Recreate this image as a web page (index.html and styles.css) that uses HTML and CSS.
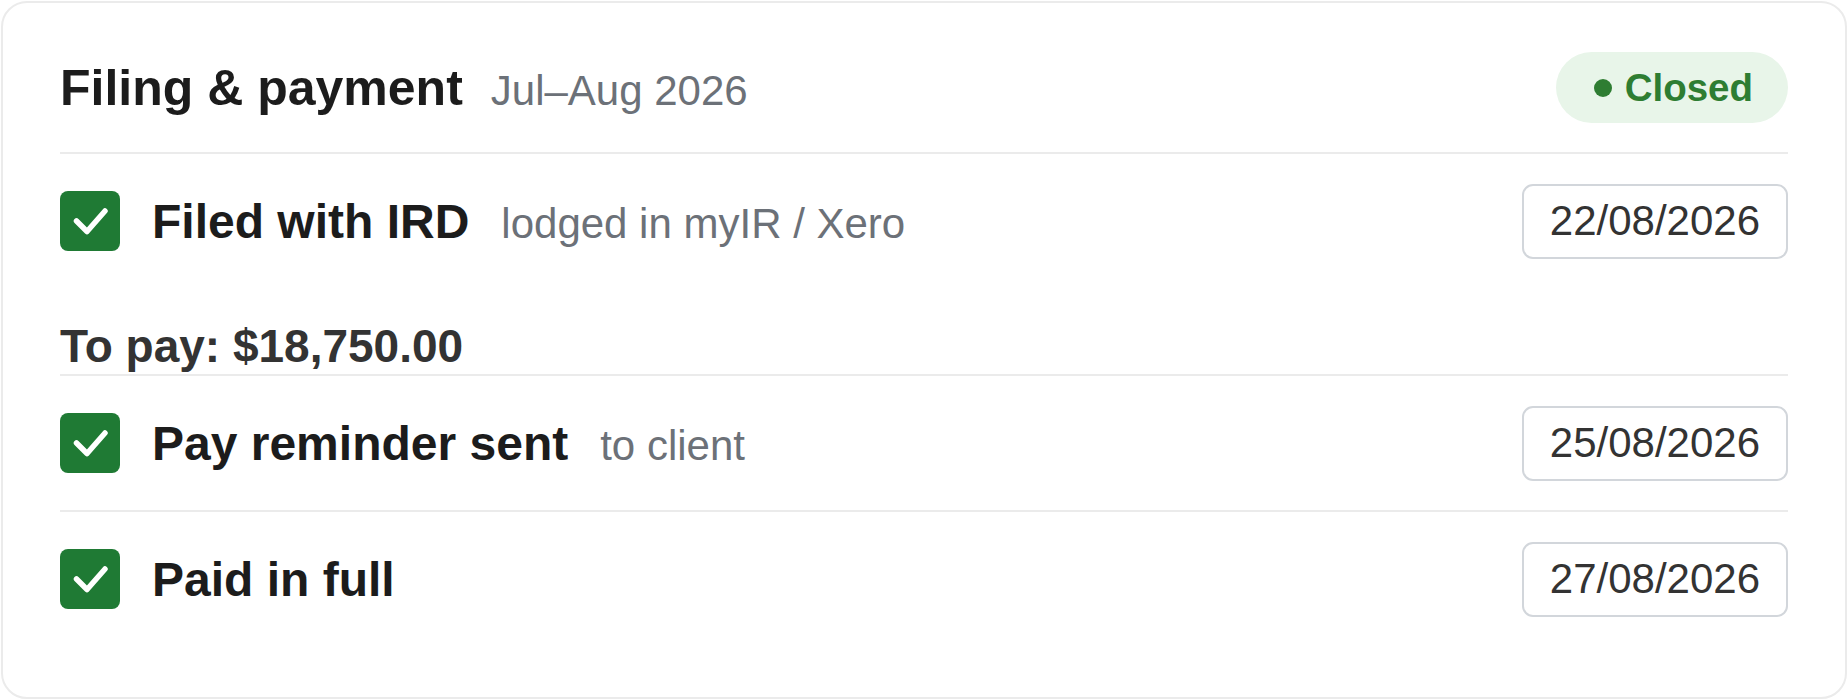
FILE: index.html
```html
<!DOCTYPE html>
<html lang="en">
<head>
<meta charset="utf-8">
<title>Filing &amp; payment</title>
<link rel="stylesheet" href="styles.css">
</head>
<body>
<section class="card">
  <header class="card-head">
    <div class="head-titles">
      <h2 class="title">Filing &amp; payment</h2>
      <span class="period">Jul–Aug 2026</span>
    </div>
    <span class="badge"><span class="badge-dot"></span>Closed</span>
  </header>

  <div class="row">
    <span class="check"><svg viewBox="0 0 60 60" width="60" height="60"><path d="M16.5 30 L27 40.5 L45 20" fill="none" stroke="#fff" stroke-width="5.5" stroke-linecap="round" stroke-linejoin="round"/></svg></span>
    <div class="row-text">
      <span class="label">Filed with IRD</span>
      <span class="sub">lodged in myIR / Xero</span>
    </div>
    <span class="date">22/08/2026</span>
  </div>

  <div class="to-pay">To pay: $18,750.00</div>

  <div class="row row-divided">
    <span class="check"><svg viewBox="0 0 60 60" width="60" height="60"><path d="M16.5 30 L27 40.5 L45 20" fill="none" stroke="#fff" stroke-width="5.5" stroke-linecap="round" stroke-linejoin="round"/></svg></span>
    <div class="row-text">
      <span class="label">Pay reminder sent</span>
      <span class="sub">to client</span>
    </div>
    <span class="date">25/08/2026</span>
  </div>

  <div class="row">
    <span class="check"><svg viewBox="0 0 60 60" width="60" height="60"><path d="M16.5 30 L27 40.5 L45 20" fill="none" stroke="#fff" stroke-width="5.5" stroke-linecap="round" stroke-linejoin="round"/></svg></span>
    <div class="row-text">
      <span class="label">Paid in full</span>
    </div>
    <span class="date">27/08/2026</span>
  </div>
</section>
</body>
</html>
```

FILE: styles.css
```css
* { box-sizing: border-box; }

html, body {
  margin: 0;
  padding: 0;
  background: #ffffff;
}

body {
  font-family: "Liberation Sans", Arial, sans-serif;
  color: #1c1c1c;
}

.card {
  margin: 1px;
  height: 698px;
  border: 2px solid #ebebeb;
  border-radius: 26px;
  background: #ffffff;
  padding: 49px 57px 51px 57px;
  display: flex;
  flex-direction: column;
}

.card-head {
  display: flex;
  align-items: center;
  justify-content: space-between;
  padding-bottom: 29px;
  border-bottom: 2px solid #ebebeb;
}

.head-titles {
  display: flex;
  align-items: baseline;
  gap: 28px;
}

.title {
  margin: 0;
  font-size: 50px;
  font-weight: 700;
  color: #1c1c1c;
}

.period {
  font-size: 42px;
  color: #6c7178;
}

.badge {
  display: inline-flex;
  align-items: center;
  height: 71px;
  padding: 0 35px 0 38px;
  border-radius: 36px;
  background: #e8f5e9;
  color: #2e7d32;
  font-size: 38.5px;
  font-weight: 700;
}

.badge-dot {
  width: 18px;
  height: 18px;
  border-radius: 50%;
  background: #2e7d32;
  margin-right: 13px;
}

.row {
  display: flex;
  align-items: center;
  padding: 28px 0;
  min-height: 134px;
}

.row-divided {
  min-height: 136px;
  border-bottom: 2px solid #ebebeb;
}

.check {
  flex: none;
  width: 60px;
  height: 60px;
  border-radius: 8px;
  background: #1f7a34;
  display: flex;
}

.row-text {
  flex: 1;
  display: flex;
  align-items: baseline;
  gap: 32px;
  margin-left: 32px;
}

.label {
  font-size: 48px;
  font-weight: 700;
  color: #1c1c1c;
}

.sub {
  font-size: 42px;
  color: #6c7178;
}

.date {
  flex: none;
  height: 75px;
  display: flex;
  align-items: center;
  padding: 0 26px;
  border: 2px solid #d2d6db;
  border-radius: 11px;
  font-size: 42px;
  color: #333333;
}

.to-pay {
  padding: 32px 0 2px;
  line-height: 52px;
  font-size: 46px;
  font-weight: 700;
  color: #333333;
  border-bottom: 2px solid #ebebeb;
}
```
